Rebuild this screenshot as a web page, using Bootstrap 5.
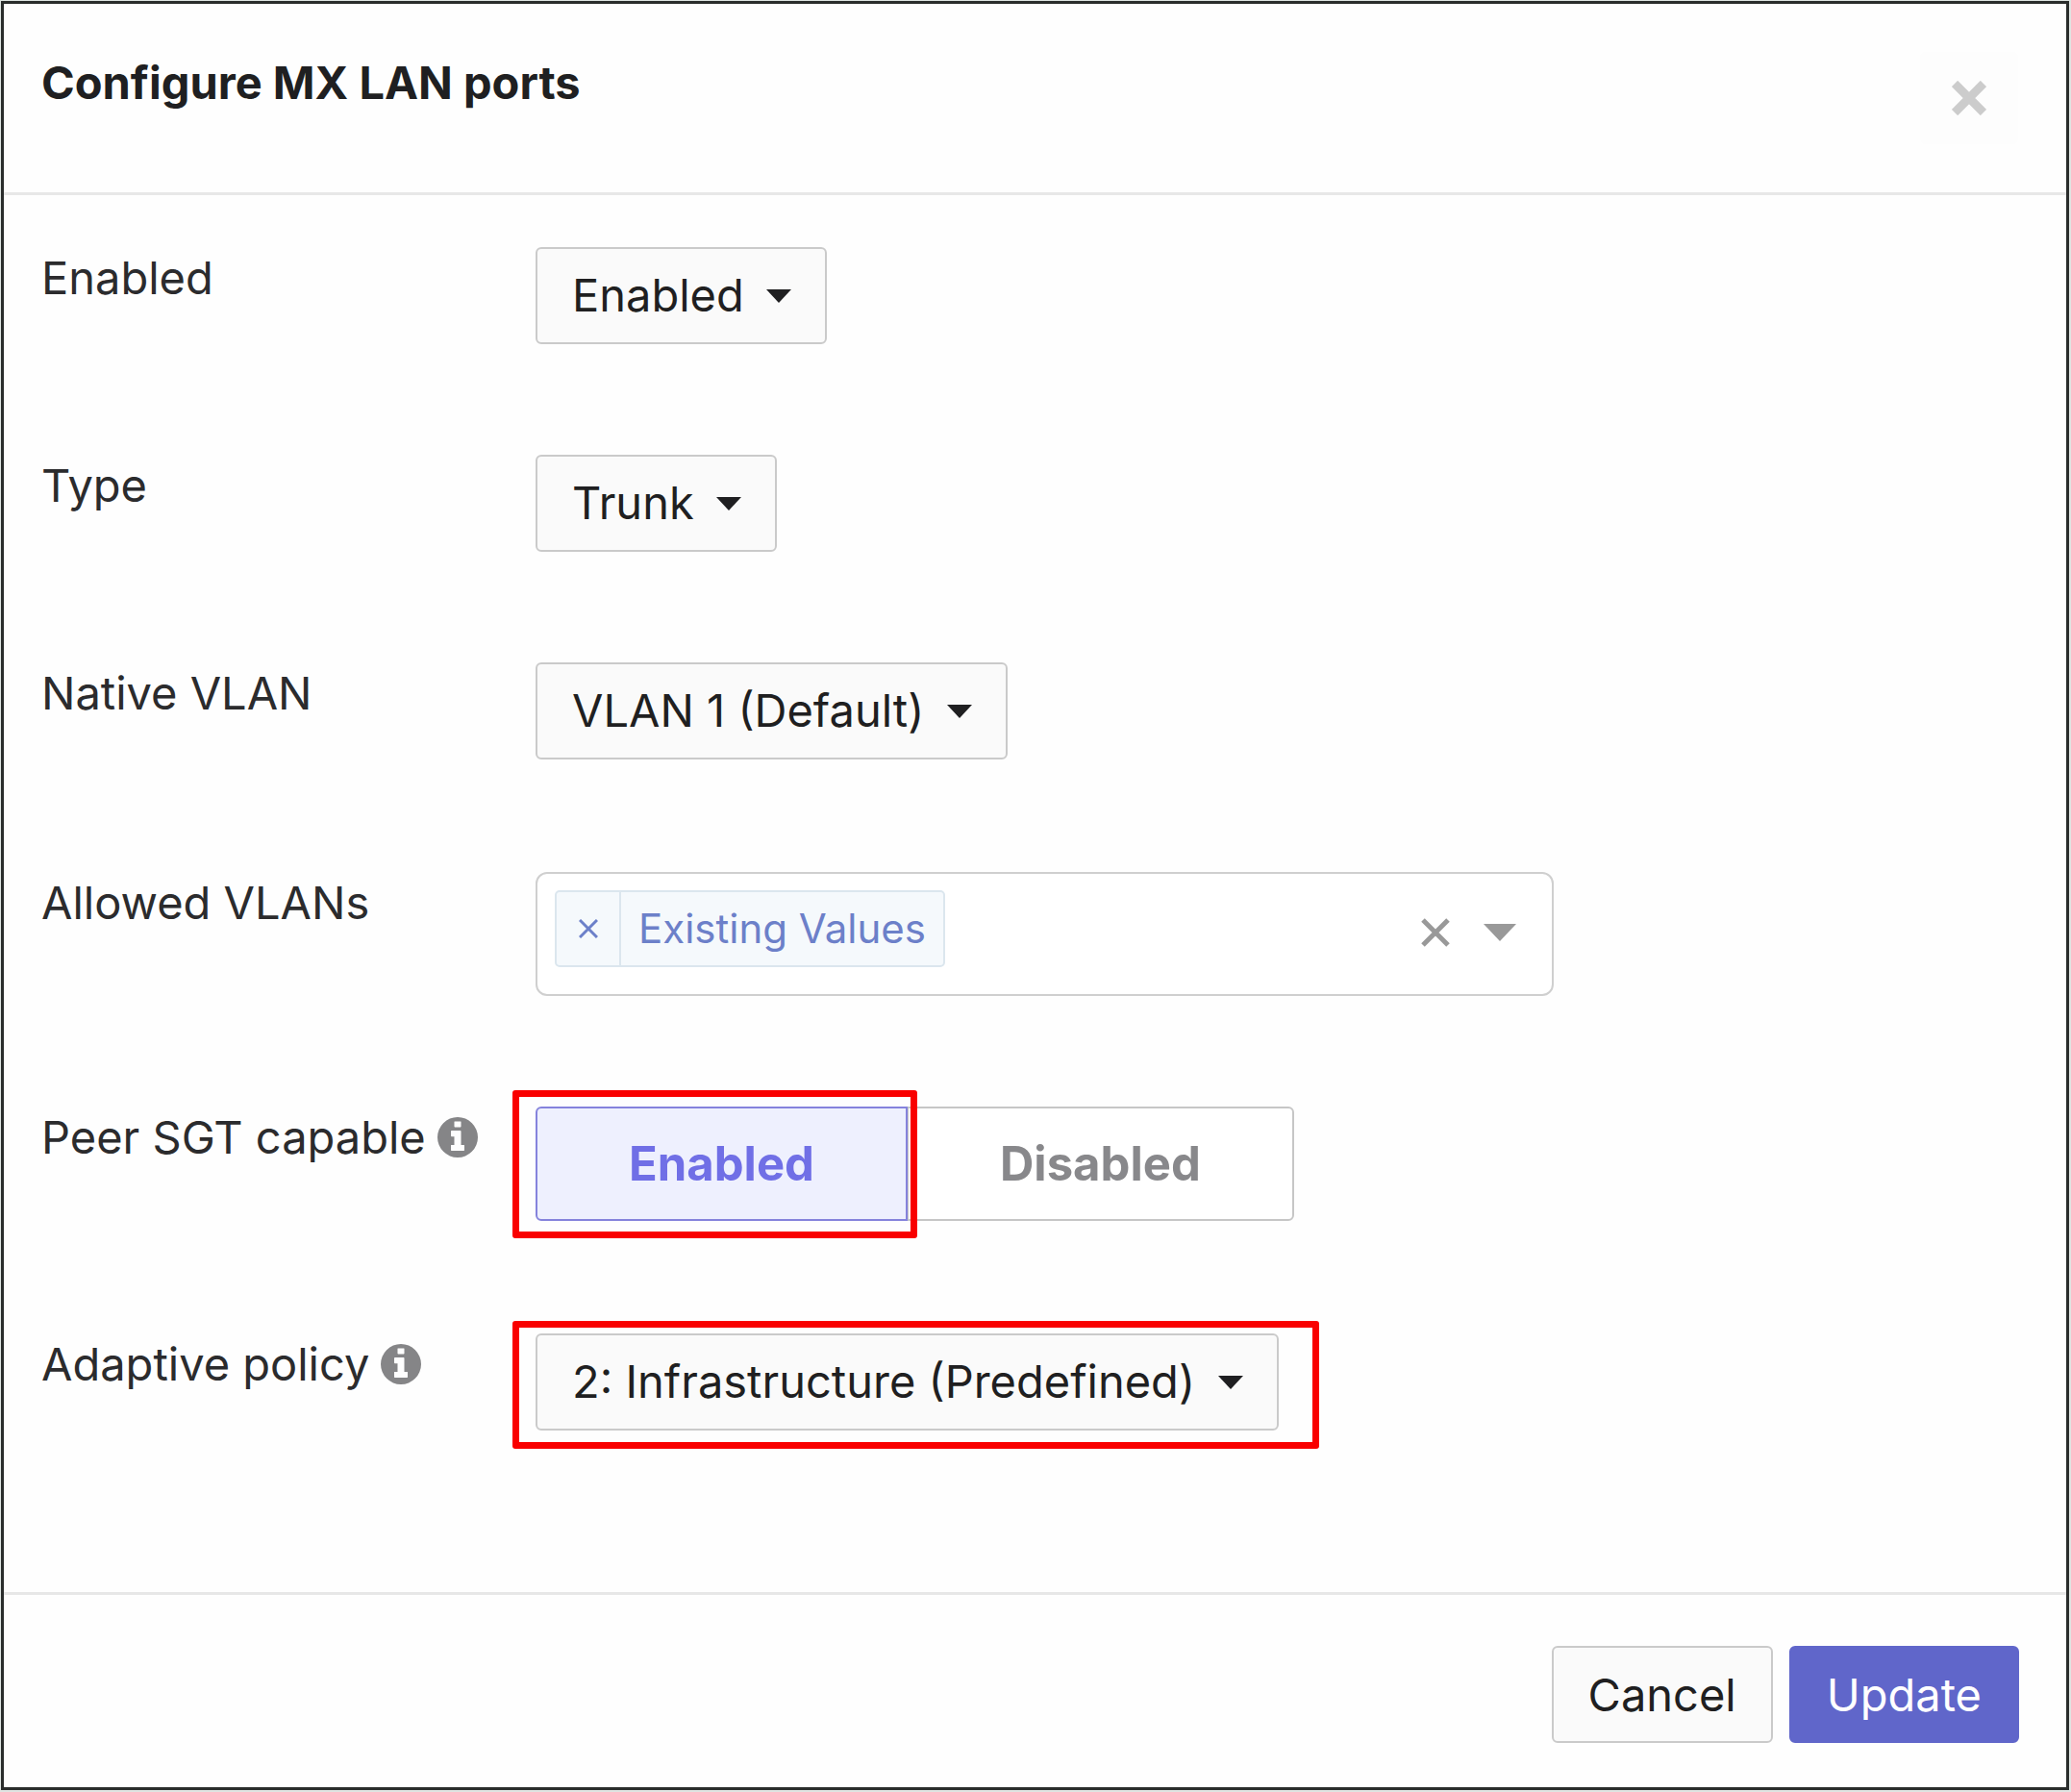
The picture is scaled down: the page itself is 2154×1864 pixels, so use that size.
<!DOCTYPE html>
<html lang="en">
<head>
<meta charset="utf-8">
<meta name="viewport" content="width=device-width, initial-scale=1">
<title>Configure MX LAN ports</title>
<link href="https://cdn.jsdelivr.net/npm/bootstrap@5.3.0/dist/css/bootstrap.min.css" rel="stylesheet">
<style>
  body { font-family: Inter, "Liberation Sans", sans-serif; font-size: 47px; line-height: 58px; color: #1f1f21; background: #fff; }
  .dialog-page { padding: 1px 2px 2px 1px; background: #dfe5e2; }
  .dialog-frame { border: 3px solid #2a2d2c; background: #fefefe; }
  .dialog-head { padding: 46px 50px 50px 39px; border-bottom: 3px solid #e7e7e7; }
  .dialog-title { font-size: 47px; line-height: 72px; font-weight: 700; color: #1f1f21; }
  .dialog-close { width: 102px; height: 96px; margin-top: 4px; background: #fdfdfd; color: #ccc; }
  .dialog-body { padding: 54px 39px 50px; }
  .field-row { padding-bottom: 115px; }
  .field-row-spaced { padding-top: 2px; }
  .field-name { width: 514px; padding-top: 3px; color: #2b2b2d; }
  .field-name svg { margin: 8px 0 0 12px; color: #858587; }
  .field-control { min-width: 0; }

  .pick { appearance: none; width: auto; max-width: 100%; height: 101px; padding: 0 84px 2px 36px; border: 2px solid #cacaca; border-radius: 6px; color: #1f1f21;
    background: #fafafa url("data:image/svg+xml,%3Csvg xmlns='http://www.w3.org/2000/svg' viewBox='0 0 26 14'%3E%3Cpath d='M0 0h26L13 14z' fill='%231f1f21'/%3E%3C/svg%3E") no-repeat right 35px center / 26px 14px; }

  .multi { max-width: 1059px; height: 129px; padding: 17px 37px 17px 18px; border: 2px solid #cfcfcf; border-radius: 12px; background: #fff; }
  .multi-tag { height: 80px; border: 2px solid #dbe6ee; border-radius: 5px; background: #f5f9fc; color: #6c80c9; font-size: 42px; }
  .multi-tag button { width: 67px; border-right: 2px solid #dbe6ee; color: #6c80c9; }
  .multi-tag span { padding: 0 18px; }
  .multi-entry { min-width: 0; outline: 0; }
  .multi-tool { color: #999; height: 87px; }
  .multi-clear { margin-right: 35px; }

  .choice { padding: 0 95px; line-height: 115px; font-size: 49px; font-weight: 700; border: 2px solid #c6c6c6; border-radius: 6px; background: #fff; color: #88888b; }
  .btn-check:checked + .choice { background: #eef0fe; border-color: #8583dc; color: #706fe6; }

  .marked::after { content: ""; position: absolute; border: 7px solid #f90000; border-radius: 3px; pointer-events: none; z-index: 3; }
  .marked-choice::after { inset: -19px -12px -20px -26px; }
  .marked-pick::after { inset: -13px -42px -19px -24px; }

  .dialog-foot { padding: 53px 49px 46px; border-top: 3px solid #e7e7e7; gap: 17px; }
  .act { height: 101px; padding: 0 36px; border: 2px solid #cacaca; border-radius: 6px; background: #fafafa; color: #1f1f21; font-size: 47px; line-height: 58px; }
  .act-main { padding: 0 37px; border-color: #6066ca; background: #6066ca; color: #fff; }
</style>
<script src="https://cdn.jsdelivr.net/npm/bootstrap@5.3.0/dist/js/bootstrap.bundle.min.js"></script>
</head>
<body>
<svg class="d-none" xmlns="http://www.w3.org/2000/svg">
  <symbol id="info" viewBox="0 0 1536 1536"><path fill="currentColor" fill-rule="evenodd" d="M768 0a768 768 0 1 0 0 1536a768 768 0 0 0 0-1536zM1024 1248v-160q0-14-9-23t-23-9h-96v-512q0-14-9-23t-23-9h-320q-14 0-23 9t-9 23v160q0 14 9 23t23 9h96v320h-96q-14 0-23 9t-9 23v160q0 14 9 23t23 9h448q14 0 23-9t9-23zM896 352v-160q0-14-9-23t-23-9h-192q-14 0-23 9t-9 23v160q0 14 9 23t23 9h192q14 0 23-9t9-23z"/></symbol>
</svg>
<div class="dialog-page min-vh-100 d-flex">
  <form class="dialog-frame d-flex flex-column flex-grow-1" onsubmit="return false">
    <header class="dialog-head d-flex justify-content-between align-items-start">
      <h1 class="dialog-title m-0">Configure MX LAN ports</h1>
      <button type="button" class="dialog-close btn border-0 p-0 d-flex align-items-center justify-content-center" aria-label="Close">
        <svg width="36" height="36" viewBox="0 0 36 36"><path d="M3 3l30 30M33 3L3 33" stroke="currentColor" stroke-width="9"/></svg>
      </button>
    </header>

    <main class="dialog-body flex-grow-1">
      <div class="field-row d-flex">
        <label class="field-name flex-shrink-0" for="enabled">Enabled</label>
        <div class="field-control flex-grow-1 d-flex"><select class="pick" id="enabled"><option>Enabled</option></select></div>
      </div>
      <div class="field-row d-flex">
        <label class="field-name flex-shrink-0" for="type">Type</label>
        <div class="field-control flex-grow-1 d-flex"><select class="pick" id="type"><option>Trunk</option></select></div>
      </div>
      <div class="field-row d-flex">
        <label class="field-name flex-shrink-0" for="native">Native VLAN</label>
        <div class="field-control flex-grow-1 d-flex"><select class="pick" id="native"><option>VLAN 1 (Default)</option></select></div>
      </div>
      <div class="field-row field-row-spaced d-flex">
        <label class="field-name flex-shrink-0" for="allowed">Allowed VLANs</label>
        <div class="field-control flex-grow-1">
          <div class="multi d-flex align-items-start">
            <div class="multi-tag d-flex align-items-stretch flex-shrink-0">
              <button type="button" class="btn p-0 border-top-0 border-bottom-0 border-start-0 rounded-0 d-flex align-items-center justify-content-center" aria-label="Remove Existing Values">
                <svg width="20" height="20" viewBox="0 0 20 20"><path d="M1 1l18 18M19 1L1 19" stroke="currentColor" stroke-width="3"/></svg>
              </button>
              <span class="d-flex align-items-center text-nowrap">Existing Values</span>
            </div>
            <input class="multi-entry flex-grow-1 border-0 bg-transparent h-100" id="allowed" type="text">
            <button type="button" class="multi-tool multi-clear btn p-0 border-0 d-flex align-items-center" aria-label="Clear all">
              <svg width="30" height="30" viewBox="0 0 30 30"><path d="M2 2l26 26M28 2L2 28" stroke="currentColor" stroke-width="5"/></svg>
            </button>
            <button type="button" class="multi-tool btn p-0 border-0 d-flex align-items-center" aria-label="Open list">
              <svg width="34" height="18" viewBox="0 0 34 18"><path d="M0 0h34L17 18z" fill="currentColor"/></svg>
            </button>
          </div>
        </div>
      </div>
      <div class="field-row d-flex">
        <div class="field-name flex-shrink-0 d-flex" id="peer">Peer SGT capable <svg width="42" height="42" role="img" aria-label="Information"><use href="#info"/></svg></div>
        <div class="field-control flex-grow-1">
          <div class="btn-group" role="radiogroup" aria-labelledby="peer">
            <input type="radio" class="btn-check" name="sgt" id="sgt-on" checked>
            <label class="choice btn py-0 marked marked-choice" for="sgt-on">Enabled</label>
            <input type="radio" class="btn-check" name="sgt" id="sgt-off">
            <label class="choice btn py-0" for="sgt-off">Disabled</label>
          </div>
        </div>
      </div>
      <div class="field-row field-row-spaced d-flex">
        <label class="field-name flex-shrink-0 d-flex" for="policy">Adaptive policy <svg width="42" height="42" role="img" aria-label="Information"><use href="#info"/></svg></label>
        <div class="field-control flex-grow-1 d-flex">
          <div class="marked marked-pick position-relative d-flex"><select class="pick" id="policy"><option>2: Infrastructure (Predefined)</option></select></div>
        </div>
      </div>
    </main>

    <footer class="dialog-foot d-flex justify-content-end">
      <button type="button" class="act btn">Cancel</button>
      <button type="submit" class="act act-main btn">Update</button>
    </footer>
  </form>
</div>
</body>
</html>
